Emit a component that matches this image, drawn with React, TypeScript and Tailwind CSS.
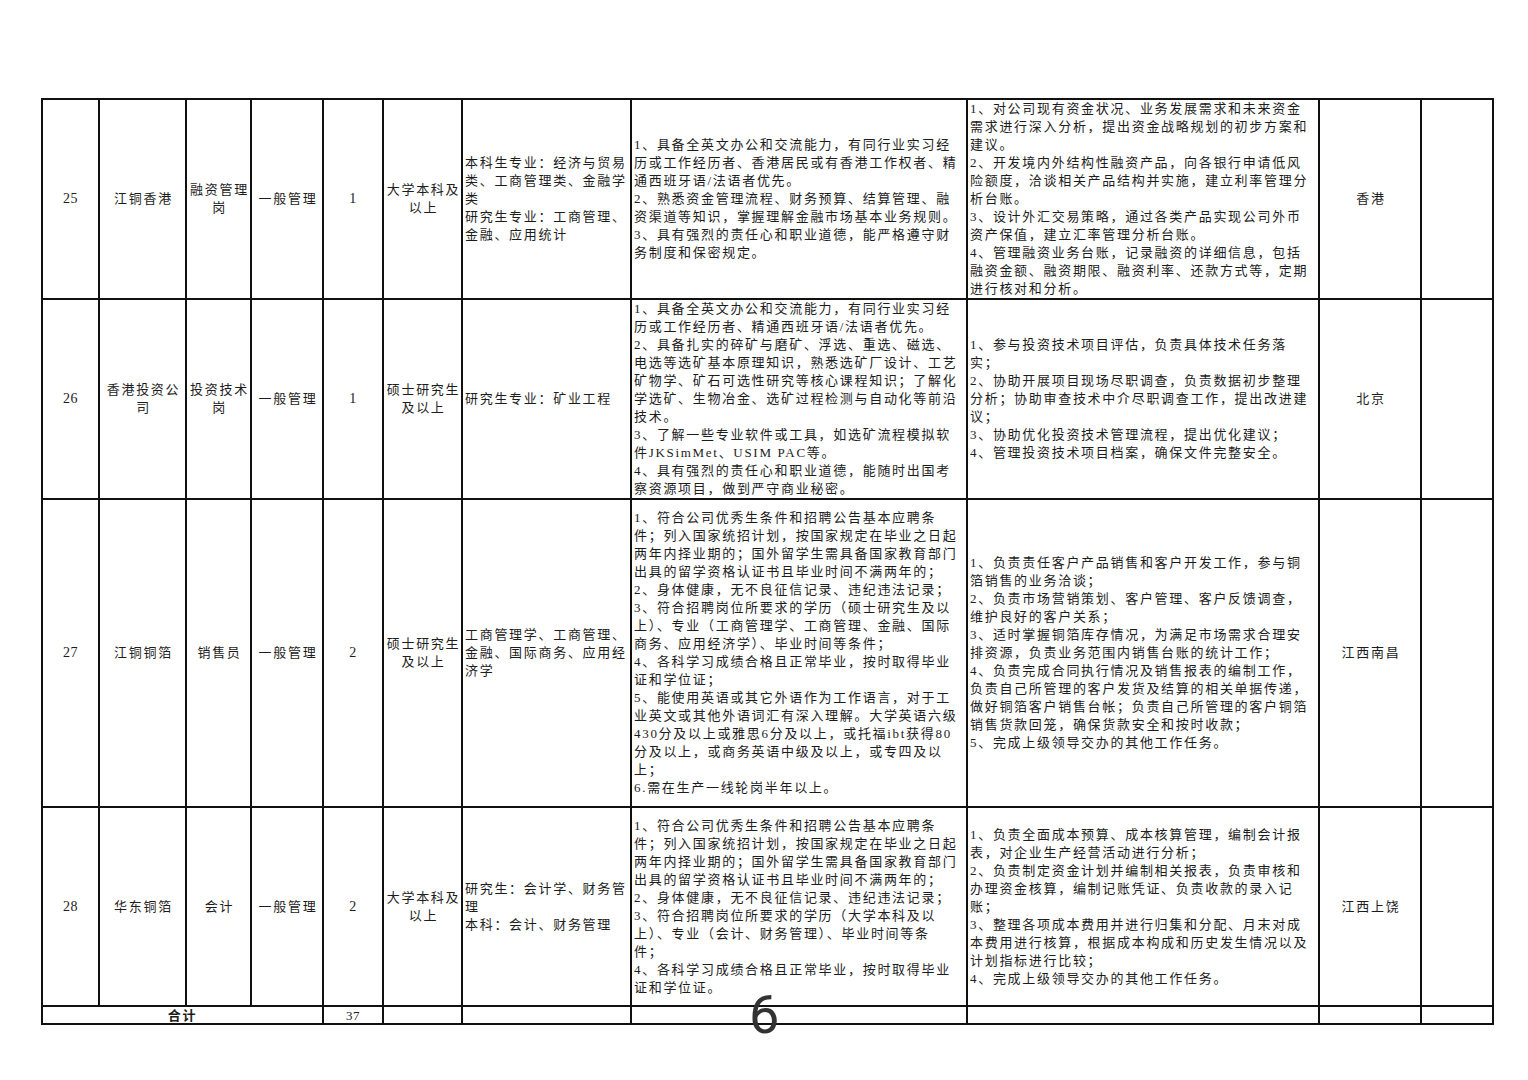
import React from "react";

type Row = {
  no: string;
  company: string[];
  post: string[];
  type: string[];
  count: string;
  edu: string[];
  major: string[];
  req: string[];
  duty: string[];
  loc: string;
  h: string;
};

const rows: Row[] = [
  {
    no: "25",
    company: ["江铜香港"],
    post: ["融资管理", "岗"],
    type: ["一般管理"],
    count: "1",
    edu: ["大学本科及", "以上"],
    major: ["本科生专业：经济与贸易", "类、工商管理类、金融学", "类", "研究生专业：工商管理、", "金融、应用统计"],
    req: [
      "1、具备全英文办公和交流能力，有同行业实习经",
      "历或工作经历者、香港居民或有香港工作权者、精",
      "通西班牙语/法语者优先。",
      "2、熟悉资金管理流程、财务预算、结算管理、融",
      "资渠道等知识，掌握理解金融市场基本业务规则。",
      "3、具有强烈的责任心和职业道德，能严格遵守财",
      "务制度和保密规定。",
    ],
    duty: [
      "1、对公司现有资金状况、业务发展需求和未来资金",
      "需求进行深入分析，提出资金战略规划的初步方案和",
      "建议。",
      "2、开发境内外结构性融资产品，向各银行申请低风",
      "险额度，洽谈相关产品结构并实施，建立利率管理分",
      "析台账。",
      "3、设计外汇交易策略，通过各类产品实现公司外币",
      "资产保值，建立汇率管理分析台账。",
      "4、管理融资业务台账，记录融资的详细信息，包括",
      "融资金额、融资期限、融资利率、还款方式等，定期",
      "进行核对和分析。",
    ],
    loc: "香港",
    h: "h-[199px]",
  },
  {
    no: "26",
    company: ["香港投资公", "司"],
    post: ["投资技术", "岗"],
    type: ["一般管理"],
    count: "1",
    edu: ["硕士研究生", "及以上"],
    major: ["研究生专业：矿业工程"],
    req: [
      "1、具备全英文办公和交流能力，有同行业实习经",
      "历或工作经历者、精通西班牙语/法语者优先。",
      "2、具备扎实的碎矿与磨矿、浮选、重选、磁选、",
      "电选等选矿基本原理知识，熟悉选矿厂设计、工艺",
      "矿物学、矿石可选性研究等核心课程知识；了解化",
      "学选矿、生物冶金、选矿过程检测与自动化等前沿",
      "技术。",
      "3、了解一些专业软件或工具，如选矿流程模拟软",
      "件JKSimMet、USIM PAC等。",
      "4、具有强烈的责任心和职业道德，能随时出国考",
      "察资源项目，做到严守商业秘密。",
    ],
    duty: [
      "1、参与投资技术项目评估，负责具体技术任务落",
      "实；",
      "2、协助开展项目现场尽职调查，负责数据初步整理",
      "分析；协助审查技术中介尽职调查工作，提出改进建",
      "议；",
      "3、协助优化投资技术管理流程，提出优化建议；",
      "4、管理投资技术项目档案，确保文件完整安全。",
    ],
    loc: "北京",
    h: "h-[200px]",
  },
  {
    no: "27",
    company: ["江铜铜箔"],
    post: ["销售员"],
    type: ["一般管理"],
    count: "2",
    edu: ["硕士研究生", "及以上"],
    major: ["工商管理学、工商管理、", "金融、国际商务、应用经", "济学"],
    req: [
      "1、符合公司优秀生条件和招聘公告基本应聘条",
      "件；列入国家统招计划，按国家规定在毕业之日起",
      "两年内择业期的；国外留学生需具备国家教育部门",
      "出具的留学资格认证书且毕业时间不满两年的；",
      "2、身体健康，无不良征信记录、违纪违法记录；",
      "3、符合招聘岗位所要求的学历（硕士研究生及以",
      "上）、专业（工商管理学、工商管理、金融、国际",
      "商务、应用经济学）、毕业时间等条件；",
      "4、各科学习成绩合格且正常毕业，按时取得毕业",
      "证和学位证；",
      "5、能使用英语或其它外语作为工作语言，对于工",
      "业英文或其他外语词汇有深入理解。大学英语六级",
      "430分及以上或雅思6分及以上，或托福ibt获得80",
      "分及以上，或商务英语中级及以上，或专四及以",
      "上；",
      "6.需在生产一线轮岗半年以上。",
    ],
    duty: [
      "1、负责责任客户产品销售和客户开发工作，参与铜",
      "箔销售的业务洽谈；",
      "2、负责市场营销策划、客户管理、客户反馈调查，",
      "维护良好的客户关系；",
      "3、适时掌握铜箔库存情况，为满足市场需求合理安",
      "排资源，负责业务范围内销售台账的统计工作；",
      "4、负责完成合同执行情况及销售报表的编制工作，",
      "负责自己所管理的客户发货及结算的相关单据传递，",
      "做好铜箔客户销售台帐；负责自己所管理的客户铜箔",
      "销售货款回笼，确保货款安全和按时收款；",
      "5、完成上级领导交办的其他工作任务。",
    ],
    loc: "江西南昌",
    h: "h-[308px]",
  },
  {
    no: "28",
    company: ["华东铜箔"],
    post: ["会计"],
    type: ["一般管理"],
    count: "2",
    edu: ["大学本科及", "以上"],
    major: ["研究生：会计学、财务管", "理", "本科：会计、财务管理"],
    req: [
      "1、符合公司优秀生条件和招聘公告基本应聘条",
      "件；列入国家统招计划，按国家规定在毕业之日起",
      "两年内择业期的；国外留学生需具备国家教育部门",
      "出具的留学资格认证书且毕业时间不满两年的；",
      "2、身体健康，无不良征信记录、违纪违法记录；",
      "3、符合招聘岗位所要求的学历（大学本科及以",
      "上）、专业（会计、财务管理）、毕业时间等条",
      "件；",
      "4、各科学习成绩合格且正常毕业，按时取得毕业",
      "证和学位证。",
    ],
    duty: [
      "1、负责全面成本预算、成本核算管理，编制会计报",
      "表，对企业生产经营活动进行分析；",
      "2、负责制定资金计划并编制相关报表，负责审核和",
      "办理资金核算，编制记账凭证、负责收款的录入记",
      "账；",
      "3、整理各项成本费用并进行归集和分配、月末对成",
      "本费用进行核算，根据成本构成和历史发生情况以及",
      "计划指标进行比较；",
      "4、完成上级领导交办的其他工作任务。",
    ],
    loc: "江西上饶",
    h: "h-[199px]",
  },
];

const cell = "border-2 border-[#111] align-middle p-0";

function Lines({ lines, center }: { lines: string[]; center?: boolean }) {
  return (
    <div className={center ? "text-center pl-[2px]" : "text-left pl-[2px]"}>
      {lines.map((l, i) => (
        <div key={i} className="whitespace-nowrap">
          {l}
        </div>
      ))}
    </div>
  );
}

function Num({ v }: { v: string }) {
  return <div className="text-center text-[14px] tracking-[0.5px]">{v}</div>;
}

export default function App() {
  return (
    <div
      className="relative w-[1528px] h-[1080px] bg-white overflow-hidden pt-[98px] pl-[41px] text-[#1c1c1c]"
      style={{ fontFamily: '"Liberation Serif", "Noto Sans CJK SC", serif' }}
    >
      <table className="table-fixed border-collapse w-[1451px] text-[13px] leading-[18px] tracking-[1.7px]">
        <colgroup>
          <col className="w-[57px]" />
          <col className="w-[87px]" />
          <col className="w-[65px]" />
          <col className="w-[72px]" />
          <col className="w-[60px]" />
          <col className="w-[79px]" />
          <col className="w-[169px]" />
          <col className="w-[336px]" />
          <col className="w-[352px]" />
          <col className="w-[102px]" />
          <col className="w-[72px]" />
        </colgroup>
        <tbody>
          {rows.map((r) => (
            <tr key={r.no} className={r.h}>
              <td className={cell}>
                <Num v={r.no} />
              </td>
              <td className={cell}>
                <Lines lines={r.company} center />
              </td>
              <td className={cell}>
                <Lines lines={r.post} center />
              </td>
              <td className={cell}>
                <Lines lines={r.type} center />
              </td>
              <td className={cell}>
                <Num v={r.count} />
              </td>
              <td className={cell}>
                <Lines lines={r.edu} center />
              </td>
              <td className={cell}>
                <Lines lines={r.major} />
              </td>
              <td className={cell}>
                <Lines lines={r.req} />
              </td>
              <td className={cell}>
                <Lines lines={r.duty} />
              </td>
              <td className={cell}>
                <Lines lines={[r.loc]} center />
              </td>
              <td className={cell}></td>
            </tr>
          ))}
          <tr className="h-[16px]">
            <td className={cell} colSpan={4}>
              <div className="text-center font-bold leading-[14px] pt-[2px]">合计</div>
            </td>
            <td className={cell}>
              <div className="text-center leading-[14px] pt-[2px] tracking-[0.5px]">37</div>
            </td>
            <td className={cell}></td>
            <td className={cell}></td>
            <td className={cell}></td>
            <td className={cell}></td>
            <td className={cell}></td>
            <td className={cell}></td>
          </tr>
        </tbody>
      </table>
      <div
        className="absolute left-[749px] top-[988px] text-[54px] leading-none text-[#333] tracking-normal"
        style={{ fontFamily: "Roboto, sans-serif" }}
      >
        6
      </div>
    </div>
  );
}
